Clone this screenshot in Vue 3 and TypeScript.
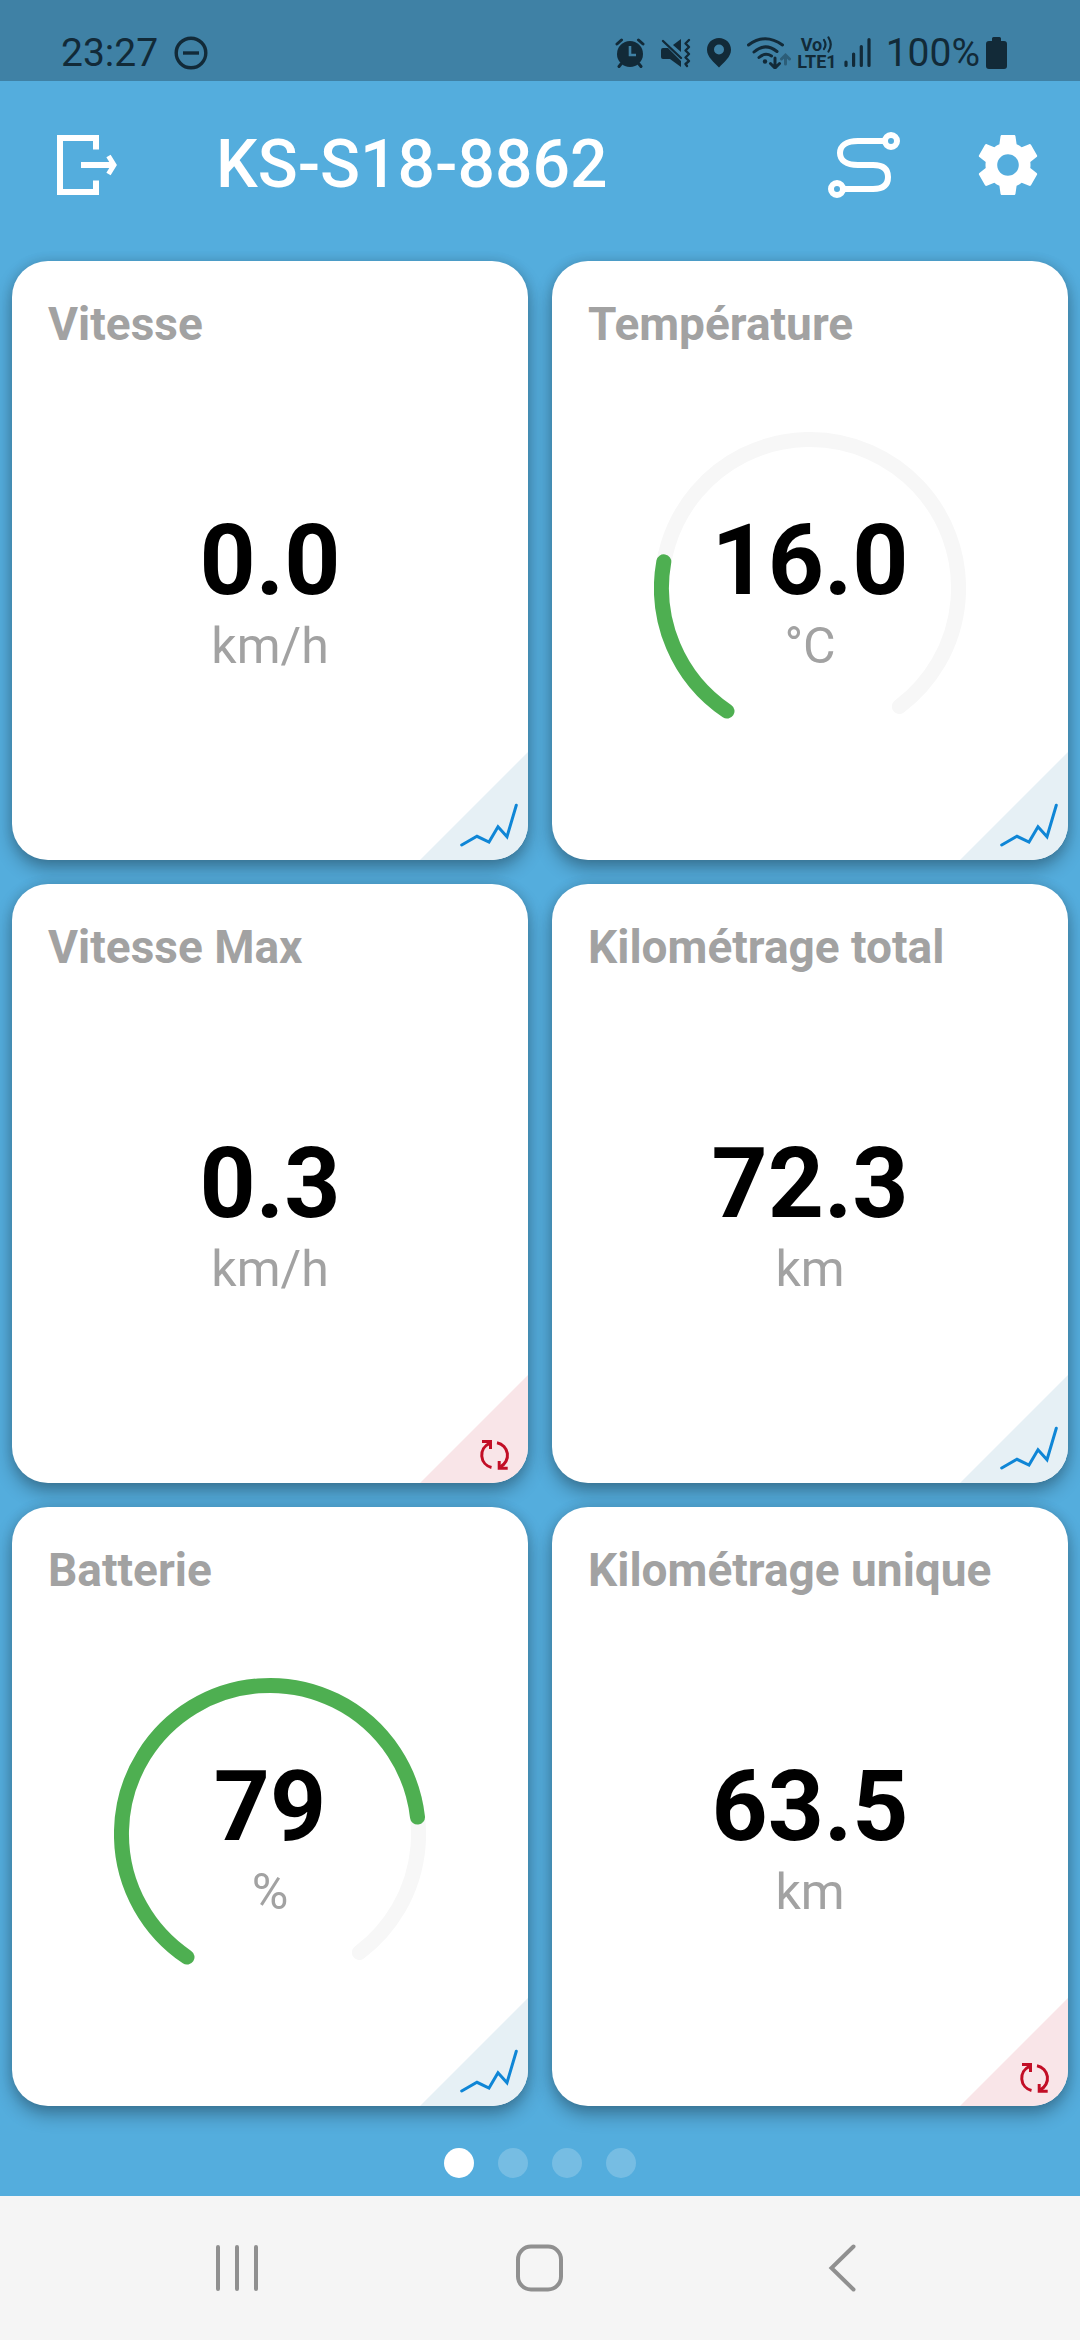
<script setup lang="ts">
import { ref } from 'vue'

type Action = 'chart' | 'reset'

interface Tile {
  title: string
  value: string
  unit: string
  action: Action
  /** Filled share of the gauge, from 0 to 1; tiles without it show no gauge. */
  level?: number
}

const tiles: Tile[] = [
  { title: 'Vitesse', value: '0.0', unit: 'km/h', action: 'chart' },
  { title: 'Température', value: '16.0', unit: '°C', action: 'chart', level: 0.229 },
  { title: 'Vitesse Max', value: '0.3', unit: 'km/h', action: 'reset' },
  { title: 'Kilométrage total', value: '72.3', unit: 'km', action: 'chart' },
  { title: 'Batterie', value: '79', unit: '%', action: 'chart', level: 0.794 },
  { title: 'Kilométrage unique', value: '63.5', unit: 'km', action: 'reset' },
]

const pages = ['Page 1', 'Page 2', 'Page 3', 'Page 4']
const currentPage = ref(0)

const GAUGE_START = 214
const GAUGE_SWEEP = 289
const GAUGE_RADIUS = 148.5
const GAUGE_CENTER = { x: 156, y: 210 }

function gaugePoint(angle: number): string {
  const rad = (angle * Math.PI) / 180
  const x = GAUGE_CENTER.x + GAUGE_RADIUS * Math.sin(rad)
  const y = GAUGE_CENTER.y - GAUGE_RADIUS * Math.cos(rad)
  return `${x.toFixed(1)} ${y.toFixed(1)}`
}

function gaugeArc(share: number): string {
  const sweep = GAUGE_SWEEP * share
  const large = sweep > 180 ? 1 : 0
  return `M${gaugePoint(GAUGE_START)}A${GAUGE_RADIUS} ${GAUGE_RADIUS} 0 ${large} 1 ${gaugePoint(GAUGE_START + sweep)}`
}
</script>

<template>
  <div class="screen">
    <div class="status">
      <span class="status-text">23:27</span>
      <svg class="dnd" width="34" height="34" viewBox="0 0 34 34" aria-hidden="true">
        <circle cx="17" cy="17" r="14.8" fill="none" stroke="currentColor" stroke-width="3.4" />
        <path d="M9 17H25" stroke="currentColor" stroke-width="3.4" />
      </svg>

      <div class="status-icons">
        <svg width="30" height="32" viewBox="0 0 30 32" aria-hidden="true">
          <circle cx="15" cy="17" r="13" fill="currentColor" />
          <path d="M2 7L6.500 3M28 7L23.500 3M6 27L4 29.500M24 27L26 29.500" stroke="currentColor" stroke-width="3" stroke-linecap="round" />
          <path d="M15 9V18H21" fill="none" stroke="#3f81a5" stroke-width="2.600" />
        </svg>
        <svg width="30" height="32" viewBox="0 0 30 32" aria-hidden="true">
          <path d="M2 11H7L20 24V30L9 22H2Q0 22 0 20V13Q0 11 2 11Z" fill="currentColor" />
          <path d="M12 8L20 2V15Z" fill="currentColor" />
          <path d="M2 4L20 21" stroke="currentColor" stroke-width="2.400" stroke-linecap="round" />
          <path d="M28 3L24.500 6.500L28 10L24.500 13.500L28 17L24.500 20.500L28 24L24.500 27L26 29" fill="none" stroke="currentColor" stroke-width="2.400" stroke-linecap="round" stroke-linejoin="round" />
        </svg>
        <svg width="24" height="32" viewBox="0 0 24 32" aria-hidden="true">
          <path fill-rule="evenodd" d="M12 1C5.400 1 0 6 0 12.700C0 20 7 25 12 30.500C17 25 24 20 24 12.700C24 6 18.600 1 12 1ZM12 7.500A5 5 0 1 1 12 17.500A5 5 0 1 1 12 7.500Z" fill="currentColor" />
        </svg>
        <svg class="wifi" width="44" height="32" viewBox="0 0 44 32" aria-hidden="true">
          <g fill="none" stroke="currentColor" stroke-width="3" stroke-linecap="round">
            <path d="M1.500 8Q18 -4.500 35.500 8" />
            <path d="M7 15Q18 5 30 14.500" />
            <path d="M12 20.500Q18 15 24.500 19" />
            <path d="M28 21V30M23.500 26.500L28 31L32.500 26.500" />
            <path d="M38.500 27V18.500M34.500 22L38.500 18L42.500 22" opacity="0.400" />
          </g>
          <circle cx="18" cy="24.500" r="2.200" fill="currentColor" />
        </svg>
        <div class="volte">
          <span class="volte-row">Vo<svg width="11" height="17" viewBox="0 0 11 17" aria-hidden="true">
            <path d="M2 4Q5 8.500 2 13M6.500 1.500Q11 8.500 6.500 15.500" fill="none" stroke="currentColor" stroke-width="2.200" stroke-linecap="round" />
          </svg></span>
          <span class="volte-row">LTE1</span>
        </div>
        <svg class="signal" width="28" height="32" viewBox="0 0 28 32" aria-hidden="true">
          <path d="M2 25V28.500M9.600 17V28.500M17.300 9.500V28.500M25 2.500V28.500" stroke="currentColor" stroke-width="3.200" stroke-linecap="round" />
        </svg>
        <span class="status-text percent">100%</span>
        <svg class="cell" width="21" height="32" viewBox="0 0 21 32" aria-hidden="true">
          <path d="M7.500 0H13.500Q15 0 15 1.500V4H18Q21 4 21 7V29Q21 32 18 32H3Q0 32 0 29V7Q0 4 3 4H6V1.500Q6 0 7.500 0Z" fill="currentColor" />
        </svg>
      </div>
    </div>

    <header class="bar">
      <button type="button" class="icon-button" aria-label="Déconnexion">
        <svg width="60" height="60" viewBox="0 0 60 60" aria-hidden="true">
          <g fill="none" stroke="currentColor" stroke-width="6">
            <path d="M39 14.500V3H3V57H39V45.500" />
            <path d="M24 30H56" />
            <path d="M51.500 21L57 30L51.500 39" stroke-width="5" />
          </g>
        </svg>
      </button>
      <h1 class="device">KS-S18-8862</h1>
      <button type="button" class="icon-button" aria-label="Trajet">
        <svg width="72" height="66" viewBox="0 0 72 66" aria-hidden="true">
          <g fill="none" stroke="currentColor" stroke-width="6">
            <circle cx="63" cy="9" r="6" />
            <circle cx="9" cy="57" r="6" />
            <path d="M57 9H30C18 9 12 14 12 21S18 33 30 33H45C55 33 60 37 60 45S55 57 45 57H15" />
          </g>
        </svg>
      </button>
      <button type="button" class="icon-button" aria-label="Paramètres">
        <svg width="72" height="72" viewBox="0 0 24 24" aria-hidden="true">
          <path fill="currentColor" d="M19.430 12.980c.04-.32.07-.64.07-.98s-.03-.66-.07-.98l2.110-1.650c.19-.15.24-.42.12-.64l-2-3.460c-.12-.22-.39-.3-.61-.22l-2.490 1c-.52-.4-1.080-.73-1.690-.98l-.38-2.650C14.460 2.180 14.250 2 14 2h-4c-.25 0-.46.18-.49.42l-.38 2.650c-.61.25-1.170.59-1.690.98l-2.490-1c-.23-.09-.49 0-.61.22l-2 3.460c-.13.22-.07.49.12.64l2.110 1.650c-.04.32-.07.65-.07.98s.03.66.07.98l-2.110 1.650c-.19.15-.24.42-.12.64l2 3.460c.12.22.39.3.61.22l2.490-1c.52.4 1.080.73 1.690.98l.38 2.650c.03.24.24.42.49.42h4c.25 0 .46-.18.49-.42l.38-2.650c.61-.25 1.170-.59 1.690-.98l2.490 1c.23.09.49 0 .61-.22l2-3.460c.12-.22.07-.49-.12-.64l-2.110-1.650zM12 15.600c-1.980 0-3.600-1.620-3.600-3.600s1.620-3.600 3.600-3.600 3.600 1.620 3.600 3.600-1.620 3.600-3.600 3.600z" />
        </svg>
      </button>
    </header>

    <main class="tiles">
      <section v-for="tile in tiles" :key="tile.title" class="tile">
        <svg v-if="tile.level !== undefined" class="gauge" width="312" height="366" viewBox="0 0 312 366" aria-hidden="true">
          <path class="gauge-track" :d="gaugeArc(1)" />
          <path class="gauge-level" :d="gaugeArc(tile.level)" />
        </svg>
        <h2 class="tile-title">{{ tile.title }}</h2>
        <div class="readout">
          <span class="value">{{ tile.value }}</span>
          <span class="unit">{{ tile.unit }}</span>
        </div>
        <button
          type="button"
          class="corner"
          :class="tile.action"
          :aria-label="tile.action === 'chart' ? `Graphique ${tile.title}` : `Réinitialiser ${tile.title}`"
        >
          <svg width="108" height="108" viewBox="0 0 108 108" fill="none" stroke="currentColor" aria-hidden="true">
            <path v-if="tile.action === 'chart'" d="M41.700 93L57 84.300L69 90L78 74.700L87 84.700L96.300 53.300" stroke-width="3" stroke-linecap="round" />
            <g v-else stroke-width="3">
              <path d="M71.500 92.500A12.800 12.800 0 0 1 69.500 68.300" />
              <path d="M62 66.500H70.500V74" />
              <path d="M77 67.700A12.800 12.800 0 0 1 80.300 91.800" />
              <path d="M87.700 93.300H79.200V86" />
            </g>
          </svg>
        </button>
      </section>
    </main>

    <div class="pager">
      <button
        v-for="(page, index) in pages"
        :key="page"
        type="button"
        class="dot"
        :class="{ active: index === currentPage }"
        :aria-label="page"
        @click="currentPage = index"
      ></button>
    </div>

    <nav class="system">
      <button type="button" aria-label="Applications récentes">
        <svg width="48" height="48" viewBox="0 0 48 48" aria-hidden="true">
          <path d="M5 3V45M24 3V45M43 3V45" stroke="currentColor" stroke-width="4" stroke-linecap="round" />
        </svg>
      </button>
      <button type="button" aria-label="Accueil">
        <svg width="48" height="48" viewBox="0 0 48 48" aria-hidden="true">
          <rect x="2" y="2.500" width="43" height="43" rx="13" fill="none" stroke="currentColor" stroke-width="4" />
        </svg>
      </button>
      <button type="button" aria-label="Retour">
        <svg width="48" height="48" viewBox="0 0 48 48" aria-hidden="true">
          <path d="M34.500 2.500L12.500 24L34.500 45.500" fill="none" stroke="currentColor" stroke-width="4" stroke-linecap="round" />
        </svg>
      </button>
    </nav>
  </div>
</template>

<style>
body {
  margin: 0;
}
</style>

<style scoped>
.screen {
  display: flex;
  flex-direction: column;
  min-height: 100vh;
  background: #54addd;
  font-family: Roboto, "Liberation Sans", sans-serif;
}

svg {
  display: block;
  flex: none;
}

button {
  padding: 0;
  border: 0;
  background: none;
  color: inherit;
  cursor: pointer;
}

h1,
h2 {
  margin: 0;
}

.status {
  box-sizing: border-box;
  display: flex;
  align-items: center;
  height: 81px;
  padding: 25px 73px 0 61px;
  background: #3f81a5;
  color: #122a38;
}

.status-text {
  font-size: 39px;
  line-height: 48px;
}

.dnd {
  margin-left: 16px;
}

.status-icons {
  display: flex;
  align-items: center;
  gap: 16px;
  margin-left: auto;
}

.volte {
  display: flex;
  flex-direction: column;
  margin-left: -10px;
  font-size: 18px;
  font-weight: 700;
  line-height: 17px;
}

.volte-row {
  display: flex;
  justify-content: center;
}

.signal {
  margin-left: -9px;
}

.percent {
  margin-left: -2px;
}

.cell {
  margin-left: -10px;
}

.bar {
  display: flex;
  align-items: center;
  height: 168px;
  padding: 0 36px 0 57px;
  color: #ffffff;
}

.device {
  flex: 1;
  margin-left: 96px;
  padding-left: 3px;
  font-size: 66px;
  font-weight: 500;
  line-height: 78px;
}

.icon-button + .icon-button {
  margin-left: 72px;
}

.tiles {
  flex: 1;
  display: grid;
  grid-template-columns: 1fr 1fr;
  grid-auto-rows: 1fr;
  gap: 24px;
  padding: 12px;
}

.tile {
  display: grid;
  overflow: hidden;
  border-radius: 36px;
  background: #ffffff;
  box-shadow: 0 9px 18px rgba(0, 0, 0, 0.3), 0 0 12px rgba(0, 0, 0, 0.12);
}

.tile > * {
  grid-area: 1 / 1;
}

.tile-title {
  padding: 36px 36px 0;
  color: #a2a2a2;
  font-size: 46px;
  font-weight: 700;
  line-height: 54px;
}

.gauge {
  place-self: center;
  fill: none;
  stroke-width: 15;
  stroke-linecap: round;
}

.gauge-track {
  stroke: #f7f7f7;
}

.gauge-level {
  stroke: #4eaf51;
}

.readout {
  display: flex;
  flex-direction: column;
  place-self: center;
  padding-top: 54px;
  text-align: center;
}

.value {
  color: #000000;
  font-size: 98px;
  font-weight: 700;
  line-height: 116px;
}

.unit {
  color: #a2a2a2;
  font-size: 50px;
  line-height: 54px;
}

.corner {
  place-self: end;
  clip-path: polygon(100% 0, 100% 100%, 0 100%);
}

.corner.chart {
  background: #e6f0f5;
  color: #0f86d6;
}

.corner.reset {
  background: #f9e5e8;
  color: #c20e26;
}

.pager {
  display: flex;
  justify-content: center;
  gap: 24px;
  padding: 30px 0 18px;
}

.dot {
  width: 30px;
  height: 30px;
  border-radius: 50%;
  background: rgba(255, 255, 255, 0.2);
}

.dot.active {
  background: #ffffff;
}

.system {
  display: grid;
  grid-template-columns: repeat(3, 1fr);
  height: 144px;
  padding: 0 86px;
  background: #f5f5f5;
  color: #909090;
}

.system button {
  display: grid;
  place-items: center;
}
</style>
